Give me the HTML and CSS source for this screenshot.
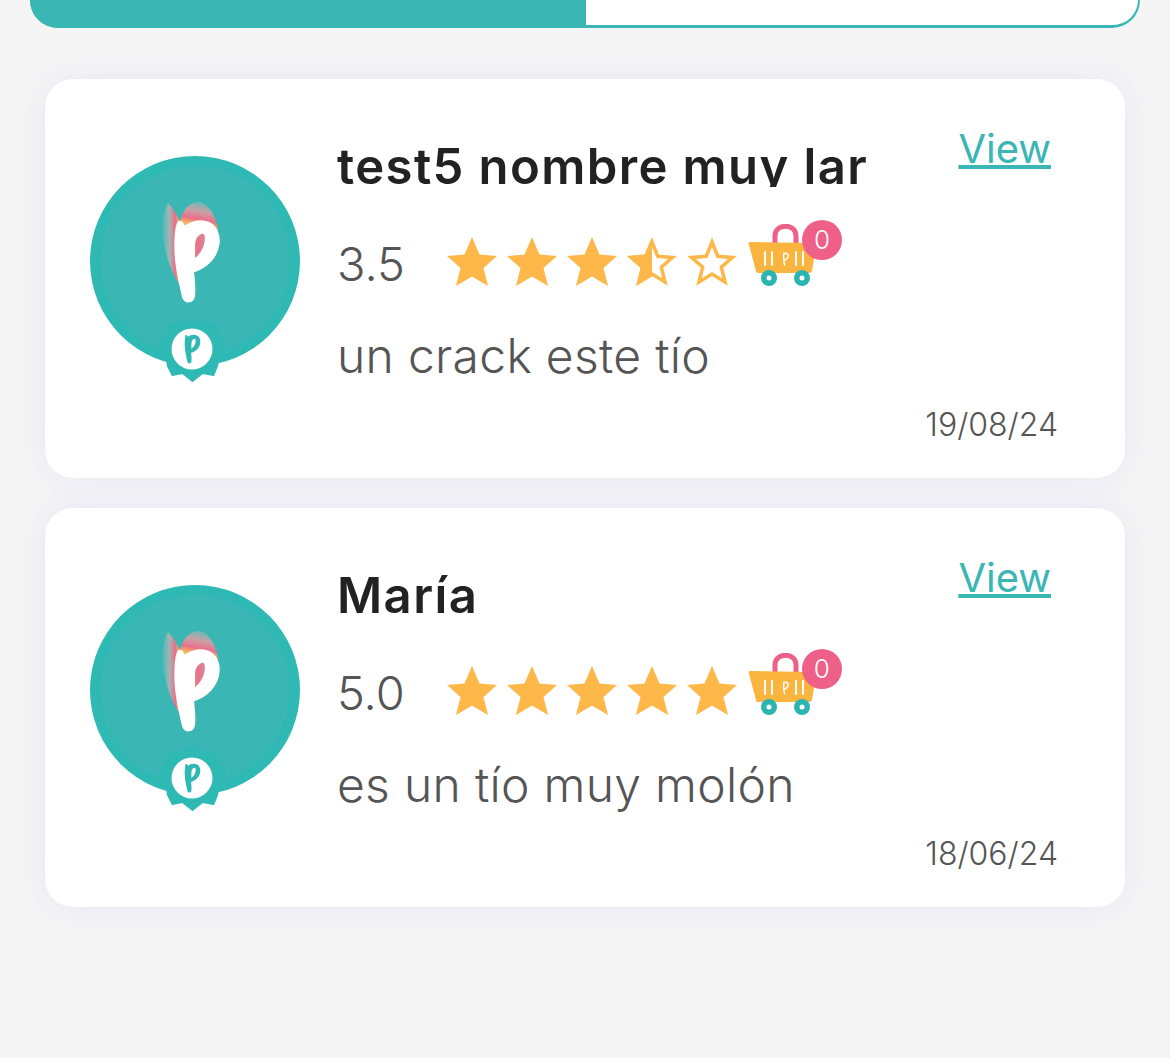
FILE: index.html
```html
<!DOCTYPE html>
<html lang="es">
<head>
  <title>Reviews</title>
  <meta charset="utf-8">
  <meta name="viewport" content="width=device-width, initial-scale=1">
  <link rel="stylesheet" href="styles.css">
</head>
<body>
  <svg class="defs" width="0" height="0" aria-hidden="true">
    <defs>
      <linearGradient id="wing-left" gradientUnits="userSpaceOnUse" x1="74" y1="80" x2="90" y2="80">
        <stop offset="0" stop-color="#5FB8B6"/>
        <stop offset=".35" stop-color="#A3B5B2"/>
        <stop offset=".7" stop-color="#EA6F8A"/>
        <stop offset="1" stop-color="#F6B35E"/>
      </linearGradient>
      <linearGradient id="wing-right" gradientUnits="userSpaceOnUse" x1="108" y1="46" x2="104" y2="68">
        <stop offset="0" stop-color="#6FB9B6"/>
        <stop offset=".4" stop-color="#C9A0A6"/>
        <stop offset=".75" stop-color="#EA6F8A"/>
        <stop offset="1" stop-color="#F6B35E"/>
      </linearGradient>
      <linearGradient id="counter" gradientUnits="userSpaceOnUse" x1="102" y1="90" x2="116" y2="90">
        <stop offset="0" stop-color="#F6B35E"/>
        <stop offset=".35" stop-color="#E9708B"/>
        <stop offset="1" stop-color="#D9889A"/>
      </linearGradient>
      <path id="logo-p" fill-rule="evenodd" d="M85.500 97 C85 85 86 72 88 67 C89 65 92 65 94.500 71 C99 67 108 64 116 66 C125 68 130 78 128.500 88 C127 100 118 111 103 115.500 C104 124 105 134 104 140 C103 146 96 148 93 141 C90 128 86 112 85.500 97 Z M104 91 C104 86 105 82 107 80 C110 77 114 75 115.500 79 C117 86 114 97 104 104 Z"/>
      <symbol id="avatar" viewBox="0 0 210 226">
        <circle cx="105" cy="105" r="105" fill="#2FB9B5"/>
        <circle cx="105" cy="105" r="95" fill="#3AB6B4"/>
        <path d="M78 47 C74 52 72 66 73 80 C75 100 82 118 91 130 L92 70 C88 60 83 52 78 47 Z" fill="url(#wing-left)"/>
        <path d="M90 66 C92 54 100 46 108 46 C118 47 126 58 128 76 L100 72 Z" fill="url(#wing-right)"/>
        <path d="M100 76 H118 V100 L100 110 Z" fill="url(#counter)"/>
        <use href="#logo-p" fill="#FFFFFF" stroke="#FFFFFF" stroke-width="2"/>
        <path d="M102.500 161 L114 168 L125 168 L129 178 L136 188 L129 199 L127 210 L123.500 219 L112.500 217 L102.500 225 L92.500 217 L82.500 219 L78 210 L76 199 L69 188 L76 178 L80 168 L91 168 Z" fill="#2FB9B5" stroke="#2FB9B5" stroke-width="2" stroke-linejoin="round"/>
        <circle cx="102" cy="193" r="20.500" fill="#FFFFFF"/>
        <use href="#logo-p" transform="translate(102.500 193) scale(.36) translate(-107 -105)" fill="#2FB9B5"/>
      </symbol>
      <symbol id="star-full" viewBox="0 0 50 49">
        <path d="M25 0 L32.500 17.500 L50 19 L36.500 31 L41 49 L25 39.500 L9 49 L13.500 31 L0 19 L17.500 17.500 Z" fill="#FDB849"/>
      </symbol>
      <symbol id="star-empty" viewBox="0 0 50 49">
        <path d="M25 5 L30.800 19.300 L45.500 20.500 L34.300 30.200 L38 45 L25 37 L12 45 L15.700 30.200 L4.500 20.500 L19.200 19.300 Z" fill="#FFFFFF" stroke="#FDB849" stroke-width="3.500"/>
      </symbol>
      <symbol id="star-half" viewBox="0 0 50 49">
        <use href="#star-empty" width="50" height="49"/>
        <path d="M25 0 L17.500 17.500 L0 19 L13.500 31 L9 49 L25 39.500 Z" fill="#FDB849"/>
      </symbol>
      <symbol id="cart" viewBox="0 0 70 63">
        <path d="M27 20 V12 C27 -1 48 -1 48 12 V20" fill="none" stroke="#EE6088" stroke-width="5"/>
        <path d="M2 18 L66 19 Q69 19 68 22 L64 47 Q63 49 61 49 L11 49 Q8 49 8 47 L1 21 Q0 18 2 18 Z" fill="#FBB53F"/>
        <g stroke="#FFFFFF" stroke-width="2" stroke-linecap="round">
          <path d="M17 28 V41 M24 28 V41 M48 28 V41 M55 28 V41"/>
          <path d="M36 29 C35 33 36 38 36.500 41 M36 30 C39 28 41 31 40 33 C39 35 37 36 36 36" fill="none" stroke-width="1.500"/>
        </g>
        <circle cx="21" cy="54" r="8" fill="#2AB5B0"/>
        <circle cx="21" cy="54" r="2.500" fill="#FFFFFF"/>
        <circle cx="54" cy="54" r="8" fill="#2AB5B0"/>
        <circle cx="54" cy="54" r="2.500" fill="#FFFFFF"/>
      </symbol>
    </defs>
  </svg>

  <div class="tabs">
    <div class="tab tab-active"></div>
    <div class="tab"></div>
  </div>

  <main class="reviews">
    <article class="card">
      <svg class="avatar"><use href="#avatar"/></svg>
      <div class="card-body">
        <div class="card-head">
          <h2 class="name">test5 nombre muy lar</h2>
          <a class="view" href="#">View</a>
        </div>
        <div class="rating">
          <span class="score">3.5</span>
          <div class="stars">
            <svg class="star"><use href="#star-full"/></svg>
            <svg class="star"><use href="#star-full"/></svg>
            <svg class="star"><use href="#star-full"/></svg>
            <svg class="star"><use href="#star-half"/></svg>
            <svg class="star"><use href="#star-empty"/></svg>
          </div>
          <div class="cart">
            <svg class="cart-icon"><use href="#cart"/></svg>
            <span class="cart-count">0</span>
          </div>
        </div>
        <p class="comment">un crack este tío</p>
        <time class="date">19/08/24</time>
      </div>
    </article>

    <article class="card">
      <svg class="avatar"><use href="#avatar"/></svg>
      <div class="card-body">
        <div class="card-head">
          <h2 class="name">María</h2>
          <a class="view" href="#">View</a>
        </div>
        <div class="rating">
          <span class="score">5.0</span>
          <div class="stars">
            <svg class="star"><use href="#star-full"/></svg>
            <svg class="star"><use href="#star-full"/></svg>
            <svg class="star"><use href="#star-full"/></svg>
            <svg class="star"><use href="#star-full"/></svg>
            <svg class="star"><use href="#star-full"/></svg>
          </div>
          <div class="cart">
            <svg class="cart-icon"><use href="#cart"/></svg>
            <span class="cart-count">0</span>
          </div>
        </div>
        <p class="comment">es un tío muy molón</p>
        <time class="date">18/06/24</time>
      </div>
    </article>
  </main>
</body>
</html>
```

FILE: styles.css
```css
*, *::before, *::after {
  margin: 0;
  padding: 0;
  box-sizing: border-box;
}

html,
body {
  height: 1058px;
  overflow: hidden;
}

body {
  background-color: #F5F5F5;
  color: #555555;
  font-family: "Inter", "Liberation Sans", sans-serif;
}

a {
  color: inherit;
}

.defs {
  position: absolute;
}

.tabs {
  display: flex;
  height: 28px;
  margin: 0 30px;
  border-radius: 0 0 28px 28px;
  overflow: hidden;
  background-color: #3AB6B4;
}

.tab {
  flex: 1;
  margin: 0 2px 3px 0;
  border-radius: 0 0 26px 0;
  background-color: #FFFFFF;
}

.tab-active {
  flex: none;
  width: 556px;
  margin: 0;
  border-radius: 0;
  background-color: #3AB6B4;
}

.reviews {
  display: flex;
  flex-direction: column;
  gap: 30px;
  margin: 51px 45px 0;
}

.card {
  display: flex;
  gap: 37px;
  height: 399px;
  padding: 50px 67px 0 45px;
  border-radius: 28px;
  background-color: #FFFFFF;
  box-shadow: 0 0 30px #E6E5F4;
}

.avatar {
  flex: none;
  width: 210px;
  height: 226px;
  margin-top: 27px;
}

.card-body {
  flex: 1;
  display: flex;
  flex-direction: column;
  min-width: 0;
}

.card-head {
  display: flex;
  justify-content: space-between;
  align-items: flex-start;
}

.name {
  height: 58px;
  overflow: hidden;
  color: #222222;
  font-size: 49px;
  font-weight: 600;
  line-height: 76px;
  letter-spacing: 1.400px;
  white-space: nowrap;
}

.view {
  margin-right: 7px;
  color: #3AB6B4;
  font-size: 40px;
  line-height: 40px;
}

.rating {
  display: flex;
  align-items: center;
  margin-top: 44px;
}

.score {
  margin-right: 42px;
  padding-top: 5px;
  font-size: 47px;
  font-weight: 350;
  line-height: 55px;
}

.stars {
  display: flex;
  gap: 10px;
}

.star {
  width: 50px;
  height: 49px;
}

.cart {
  position: relative;
  width: 94px;
  height: 63px;
  margin: -12px 0 0 11px;
}

.cart-icon {
  width: 70px;
  height: 63px;
}

.cart-count {
  position: absolute;
  top: -4px;
  right: 0;
  width: 40px;
  height: 40px;
  border-radius: 50%;
  background-color: #EE6088;
  color: #FFFFFF;
  font-size: 26px;
  font-weight: 300;
  line-height: 40px;
  text-align: center;
}

.comment {
  margin-top: 35px;
  font-size: 48px;
  font-weight: 350;
  line-height: 60px;
  letter-spacing: .3px;
}

.date {
  margin-top: 19px;
  align-self: flex-end;
  font-size: 32px;
  font-weight: 300;
  line-height: 40px;
}
```
